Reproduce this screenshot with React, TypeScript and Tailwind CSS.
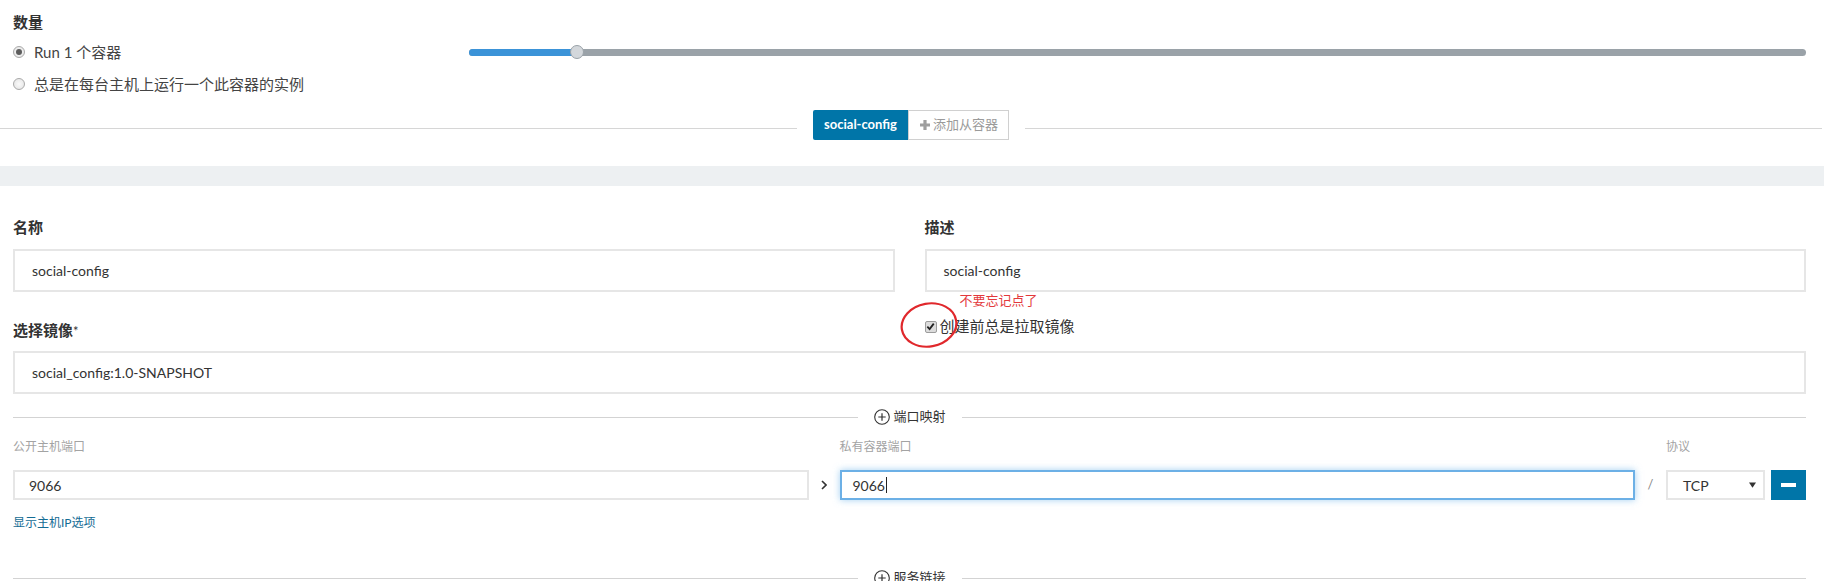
import { ReactNode } from "react";

const Radio = ({ checked }: { checked?: boolean }) => (
  <span className="flex size-[12px] shrink-0 items-center justify-center rounded-full border border-[#a9a9a9] bg-[radial-gradient(circle,#fafafa_0%,#e2e2e2_100%)]">
    {checked ? <span className="size-[6px] rounded-full bg-[#5c5c5c]" /> : null}
  </span>
);

const Checkbox = () => (
  <span className="flex size-[12px] shrink-0 items-center justify-center rounded-[2px] border border-[#9c9c9c] bg-[#dcdcdc]">
    <svg viewBox="0 0 10 10" className="size-[9px]">
      <path d="M1.5 5.2 L4 7.8 L8.6 1.8" fill="none" stroke="#222" strokeWidth="2" />
    </svg>
  </span>
);

const PlusCircle = () => (
  <svg viewBox="0 0 16 16" className="size-4 shrink-0">
    <circle cx="8" cy="8" r="7.3" fill="none" stroke="#333" strokeWidth="1.1" />
    <path d="M8 4.3 V11.7 M4.3 8 H11.7" stroke="#333" strokeWidth="1.2" />
  </svg>
);

const SectionRule = ({ label }: { label: string }) => (
  <div className="flex h-[18px] items-center">
    <div className="h-px flex-1 bg-[#d3d3d3]" />
    <div className="mx-4 flex items-center gap-[4px] text-[13px] text-[#333]">
      <PlusCircle />
      <span>{label}</span>
    </div>
    <div className="h-px flex-1 bg-[#d3d3d3]" />
  </div>
);

const Field = ({ children, className = "" }: { children: ReactNode; className?: string }) => (
  <div
    className={`flex items-center border-2 border-[#e6e6e6] bg-white text-[14px] text-[#333] ${className}`}
  >
    {children}
  </div>
);

export default function App() {
  return (
    <div className="h-[581px] w-full overflow-hidden bg-white font-['Lato','Noto_Sans_CJK_SC',sans-serif] text-[#333]">
      <section className="pt-[12px] pr-[18px] pl-[13px]">
        <h3 className="text-[15px] leading-[21px] font-bold text-[#333]">数量</h3>
        <div className="mt-[3px] grid grid-cols-[456px_1fr]">
          <div className="text-[15px] text-[#444]">
            <label className="flex h-8 items-center gap-[9px]">
              <Radio checked />
              <span>Run 1 个容器</span>
            </label>
            <label className="flex h-8 items-center gap-[9px]">
              <Radio />
              <span>总是在每台主机上运行一个此容器的实例</span>
            </label>
          </div>
          <div className="flex h-8 items-center">
            <div className="relative flex h-[7px] w-full rounded-full bg-[#9aa2a8]">
              <div className="h-full w-[108px] rounded-l-full bg-[#3b93d8]" />
              <span className="absolute top-[-4px] left-[101px] size-[14px] rounded-full border border-[#9aa2a8] bg-[#d3d7db]" />
            </div>
          </div>
        </div>
      </section>

      <div className="mt-[10px] flex h-[30px] items-center gap-4 pr-[2px]">
        <div className="mt-[6px] h-px flex-1 bg-[#d6d6d6]" />
        <div className="flex h-[30px]">
          <button className="flex w-[95px] items-center justify-center rounded-l-[2px] bg-[#0075a8] text-[13px] font-bold text-white">
            social-config
          </button>
          <button className="flex w-[101px] items-center justify-center gap-[2px] border border-[#d0d0d0] bg-white text-[13px] text-[#9a9a9a]">
            <svg viewBox="0 0 12 12" className="size-[12px]">
              <path d="M6 1 V11 M1 6 H11" stroke="#9e9e9e" strokeWidth="3.2" />
            </svg>
            <span>添加从容器</span>
          </button>
        </div>
        <div className="mt-[6px] h-px flex-1 bg-[#d6d6d6]" />
      </div>

      <div className="mt-[26px] h-5 bg-[#edf0f2]" />

      <section className="pt-[31px] pr-[18px] pl-[13px]">
        <div className="grid grid-cols-2 gap-x-[30px]">
          <label className="text-[15px] leading-[21px] font-bold">名称</label>
          <label className="text-[15px] leading-[21px] font-bold">描述</label>
          <Field className="mt-[11px] h-[43px] pl-[17px]">social-config</Field>
          <Field className="mt-[11px] h-[43px] pl-[17px]">social-config</Field>
          <div className="pt-[28px] text-[15px] leading-[21px] font-bold">
            选择镜像<span className="text-[13px] font-normal">*</span>
          </div>
          <div>
            <div className="pl-[35px] text-[13px] leading-4 text-[#e3393c]">不要忘记点了</div>
            <div className="relative mt-2 flex h-[21px] items-center gap-[3px] text-[15px] text-[#333]">
              <Checkbox />
              <span>创建前总是拉取镜像</span>
              <svg
                viewBox="0 0 60 48"
                className="pointer-events-none absolute top-[-15px] left-[-26px] h-[48px] w-[60px]"
              >
                <ellipse cx="30" cy="24" rx="27.5" ry="21.5" fill="none" stroke="#e0282c" strokeWidth="2.2" transform="rotate(-10 30 24)" />
              </svg>
            </div>
          </div>
        </div>
        <Field className="mt-[9px] h-[43px] pl-[17px]">social_config:1.0-SNAPSHOT</Field>

        <div className="mt-[14px]">
          <SectionRule label="端口映射" />
        </div>

        <div className="mt-[13px] grid grid-cols-[1fr_31px_1fr_31px_99px_6px_35px] grid-rows-[16px_30px] gap-y-[15px]">
          <span className="text-[12px] leading-4 text-[#a3a3a3]">公开主机端口</span>
          <span />
          <span className="text-[12px] leading-4 text-[#a3a3a3]">私有容器端口</span>
          <span />
          <span className="col-span-3 text-[12px] leading-4 text-[#a3a3a3]">协议</span>

          <Field className="pl-[14px]">9066</Field>
          <div className="flex items-center justify-center">
            <svg viewBox="0 0 6 10" className="h-[10px] w-[6px]">
              <path d="M1 1 L5 5 L1 9" fill="none" stroke="#333" strokeWidth="1.6" />
            </svg>
          </div>
          <div className="flex items-center border-2 border-[#6cb0e6] bg-white pl-[11px] text-[14px] text-[#333] shadow-[0_0_7px_rgba(102,175,233,0.6)]">
            <span>9066</span>
            <span className="ml-px h-4 w-px bg-[#222]" />
          </div>
          <div className="flex items-center justify-center text-[13px] text-[#888]">/</div>
          <Field className="justify-between pr-[7px] pl-[15px]">
            <span>TCP</span>
            <svg viewBox="0 0 8 6" className="h-[6px] w-[7px]">
              <path d="M0 0 H8 L4 6 Z" fill="#333" />
            </svg>
          </Field>
          <span />
          <button className="flex items-center justify-center bg-[#0075a8]">
            <span className="h-[4px] w-[15px] bg-white" />
          </button>
        </div>

        <a className="mt-[15px] block text-[12px] leading-4 text-[#146c94]">显示主机IP选项</a>

        <div className="mt-[38px]">
          <SectionRule label="服务链接" />
        </div>
      </section>
    </div>
  );
}
